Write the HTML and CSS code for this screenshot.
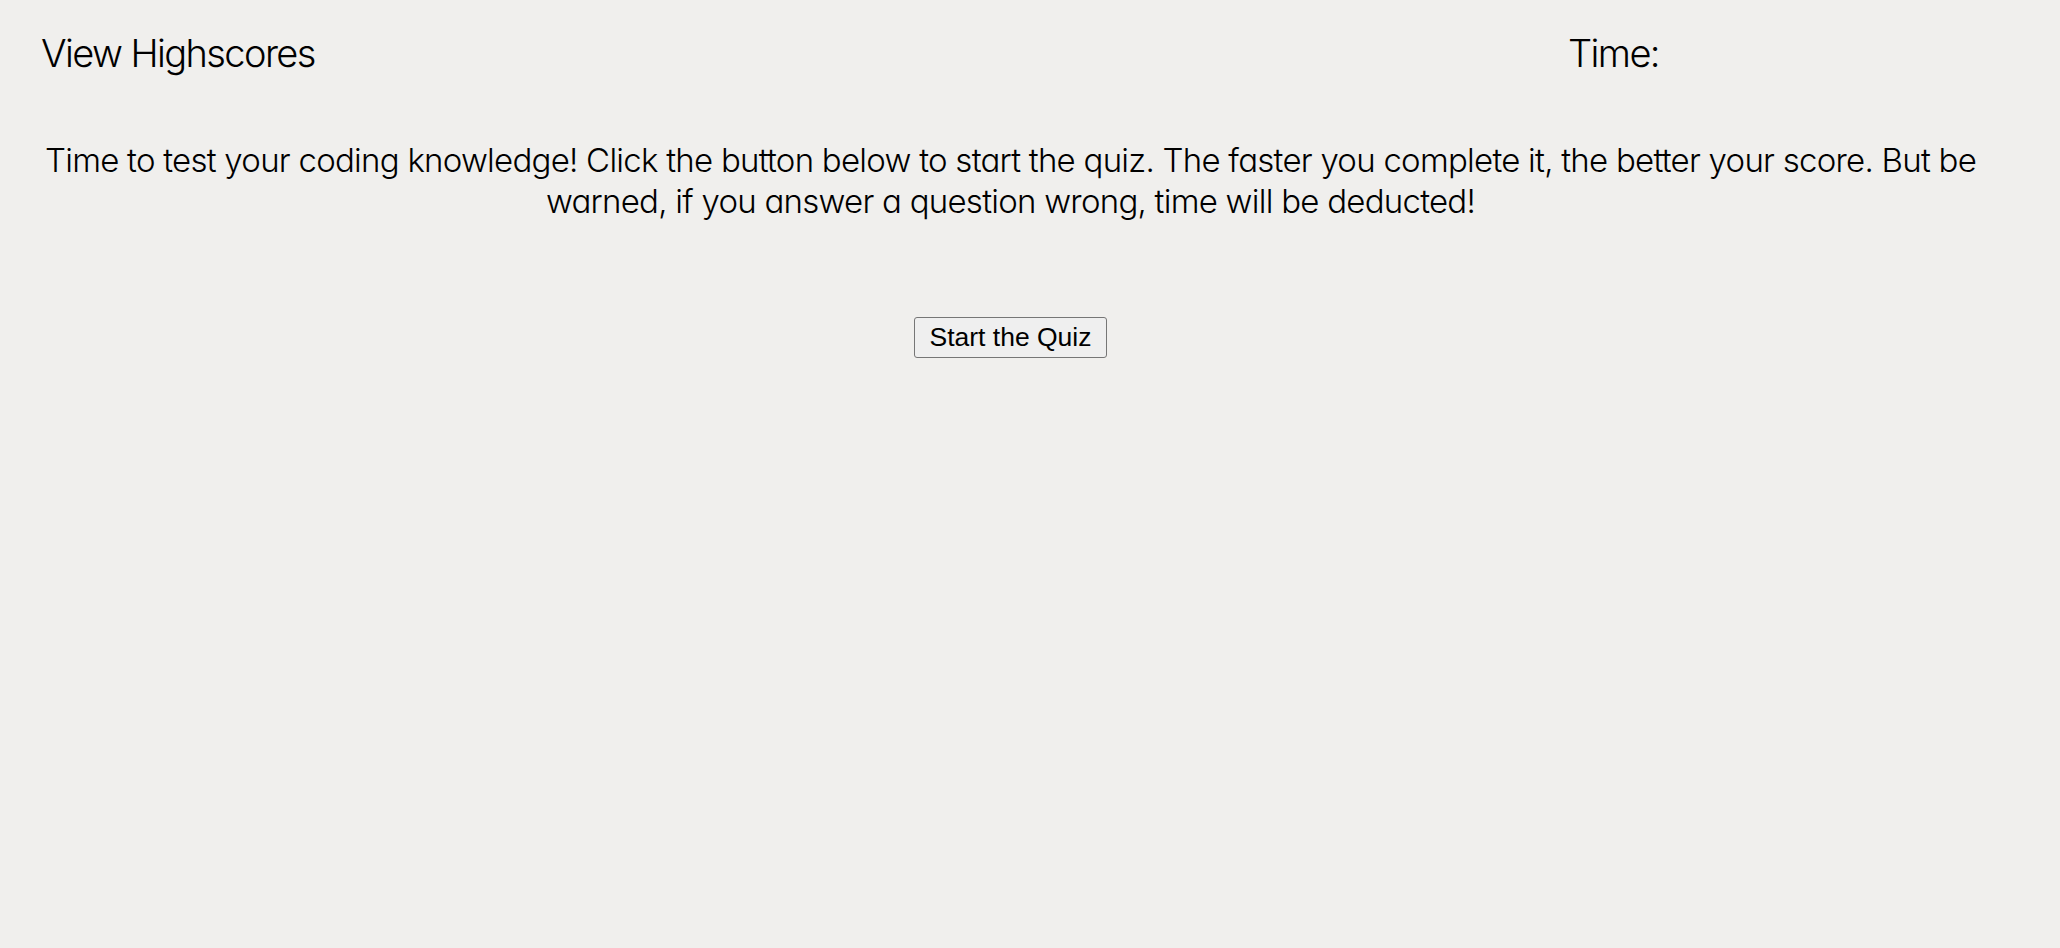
FILE: index.html
```html
<!DOCTYPE html>
<html lang="en">
<head>
<meta charset="utf-8">
<title>Code Quiz</title>
<link rel="stylesheet" href="styles.css">
</head>
<body>
<header class="topbar">
  <a class="highscores" href="#">View Highscores</a>
  <div class="timer">Time: <span class="time-left"></span></div>
</header>
<main class="intro">
  <p class="intro-text">Time to test your coding knowledge! Click the button below to start the quiz. The faster you complete it, the better your score. But be warned, if you answer a question wrong, time will be deducted!</p>
  <button class="start-btn" type="button">Start the Quiz</button>
</main>
</body>
</html>
```
FILE: styles.css
```css
html, body {
  margin: 0;
  padding: 0;
  background: #f0efed;
  color: #000;
  font-family: Inter, "Noto Sans", sans-serif;
  font-weight: 300;
  font-feature-settings: "cv11" 1;
}

.topbar {
  display: flex;
  justify-content: space-between;
  align-items: baseline;
  padding: 29px 41px 0 41px;
  font-size: 38px;
  line-height: 48px;
  letter-spacing: -1.6px;
}

.highscores {
  color: #000;
  text-decoration: none;
}

.timer {
  width: 451px;
}

.intro {
  display: flex;
  flex-direction: column;
  align-items: center;
  padding: 0 62px 0 23px;
}

.intro-text {
  margin: 63px 0 0 0;
  font-size: 33px;
  line-height: 41px;
  letter-spacing: -0.75px;
  text-align: center;
}

.start-btn {
  margin-top: 95px;
  font-family: "Liberation Sans", Arial, sans-serif;
  font-size: 26.5px;
  font-weight: 400;
  color: #000;
  background: #efefef;
  border: 1px solid #767676;
  border-radius: 3px;
  padding: 5px 14px;
  line-height: 29px;
}
```
